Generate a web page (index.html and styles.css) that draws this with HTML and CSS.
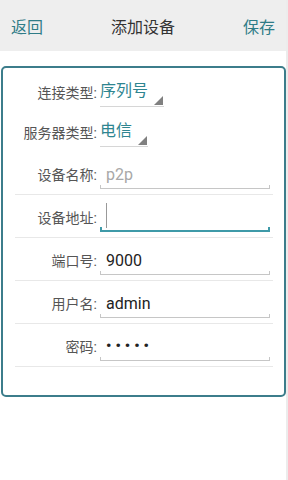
FILE: index.html
```html
<!DOCTYPE html>
<html lang="zh-CN">
<head>
    <meta charset="UTF-8">
    <meta name="viewport" content="width=device-width, initial-scale=1.0">
    <title>添加设备</title>
    <link rel="stylesheet" href="styles.css">
</head>
<body>

<div class="page">
    <div class="topbar">
        <a class="nav-btn" href="#">返回</a>
        <span class="title">添加设备</span>
        <a class="nav-btn" href="#">保存</a>
    </div>

    <div class="card">
        <div class="row spinner-row">
            <span class="field-label">连接类型:</span>
            <span class="spinner">序列号</span>
        </div>
        <div class="row spinner-row">
            <span class="field-label">服务器类型:</span>
            <span class="spinner">电信</span>
        </div>

        <div class="row field-row">
            <span class="field-label">设备名称:</span>
            <div class="edit"><span class="hint">p2p</span></div>
        </div>
        <div class="row field-row">
            <span class="field-label">设备地址:</span>
            <div class="edit focused"><span class="caret"></span></div>
        </div>
        <div class="row field-row">
            <span class="field-label">端口号:</span>
            <div class="edit">9000</div>
        </div>
        <div class="row field-row">
            <span class="field-label">用户名:</span>
            <div class="edit">admin</div>
        </div>
        <div class="row field-row">
            <span class="field-label">密码:</span>
            <div class="edit password">&bull;&bull;&bull;&bull;&bull;</div>
        </div>
    </div>
</div>

</body>
</html>
```

FILE: styles.css
```css
body {
    margin: 0;
    padding: 0;
    background-color: #fff;
    font-family: Roboto, "Noto Sans CJK SC", sans-serif;
}
.page {
    width: 286px;
    height: 480px;
    border-right: 2px solid #ececec;
}
.topbar {
    height: 51px;
    background-color: #eeeeee;
    display: flex;
    justify-content: space-between;
    align-items: center;
    padding: 0 11px;
    font-size: 16px;
}
.nav-btn {
    color: #2f7c87;
    text-decoration: none;
}
.title {
    color: #333;
}
.card {
    margin: 15px 0 0 1px;
    border: 2px solid #3c7d8b;
    border-radius: 5px;
    padding: 4px 11px 28px 12px;
}
.row {
    display: flex;
}
.field-label {
    width: 82px;
    text-align: right;
    font-size: 14px;
    color: #555;
    margin-right: 3px;
    white-space: nowrap;
}
.spinner-row {
    height: 40px;
    align-items: center;
}
.spinner {
    position: relative;
    height: 29px;
    line-height: 28px;
    padding-right: 16px;
    font-size: 16px;
    color: #2e8590;
    border-bottom: 1px solid #d6d6d6;
}
.spinner::after {
    content: "";
    position: absolute;
    right: 1px;
    bottom: 1px;
    border-style: solid;
    border-width: 0 0 9px 9px;
    border-color: transparent transparent #808080 transparent;
}
.field-row {
    height: 43px;
    box-sizing: border-box;
    align-items: flex-end;
    padding-bottom: 5px;
    border-bottom: 1px solid #e8e8e8;
}
.field-row .field-label {
    line-height: 28px;
}
.edit {
    position: relative;
    flex: 1;
    height: 27px;
    line-height: 27px;
    margin-right: 3px;
    padding-left: 6px;
    font-size: 16px;
    color: #222;
    border-bottom: 1px solid #c6c6c6;
}
.edit::before,
.edit::after {
    content: "";
    position: absolute;
    bottom: 0;
    width: 1px;
    height: 3px;
    background-color: #c6c6c6;
}
.edit::before {
    left: 0;
}
.edit::after {
    right: 0;
}
.edit.focused {
    height: 26px;
    border-bottom: 2px solid #3e9aa8;
}
.edit.focused::before,
.edit.focused::after {
    background-color: #3e9aa8;
    width: 2px;
}
.hint {
    color: #a8a8a8;
}
.caret {
    display: inline-block;
    width: 1px;
    height: 25px;
    margin-top: -1px;
    background-color: #999;
    vertical-align: top;
}
.password {
    letter-spacing: 4px;
    font-size: 15px;
    font-weight: bold;
}
```
